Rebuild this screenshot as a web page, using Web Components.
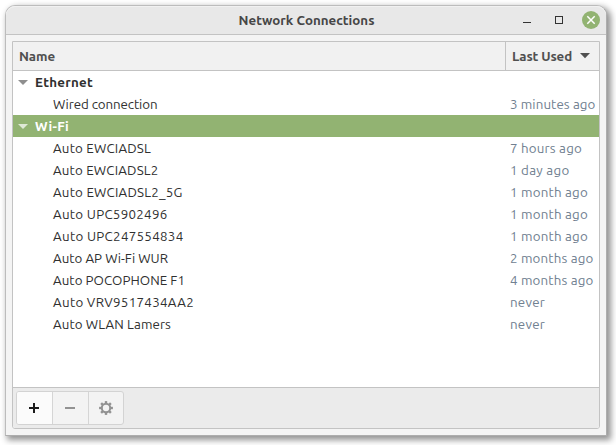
<!DOCTYPE html>
<html lang="en"><head><meta charset="utf-8"><title>Network Connections</title>
<style>html,body{margin:0;height:100%;background:#fff;overflow:hidden}body{font:13.333px/22px Ubuntu,"Noto Sans",sans-serif;color:#303030}</style></head>
<body><network-window></network-window>
<script>
// Single line label whose tracking is adjusted to fill a given width.
class FitLabel extends HTMLElement{
  connectedCallback(){
    this.attachShadow({mode:'open'}).innerHTML='<style>:host{display:block;white-space:pre;flex:none}span{display:inline-block}</style><span><slot></slot></span>';
    const s=this.shadowRoot.querySelector('span'),w=+this.getAttribute('w');
    if(w){s.style.letterSpacing=((w-s.getBoundingClientRect().width)/this.textContent.length)+'px';s.style.width=w+'px'}
  }
}
customElements.define('fit-label',FitLabel);

class TitleBar extends HTMLElement{
  constructor(){super();this.attachShadow({mode:'open'}).innerHTML=`<style>
:host{display:grid;grid-template-columns:1fr auto 1fr;height:29px;box-sizing:border-box;background:#e8e8e8;border-bottom:1px solid #c3c3c3;border-radius:9px 9px 0 0;box-shadow:inset 0 1px #f1f1f1;color:#464646;font-weight:600}
.t{grid-column:2;padding:4px 0 0 1px}
svg{justify-self:end;display:block}</style>
<div class="t"><slot></slot></div>
<svg width="88" height="29" viewBox="0 0 88 29"><path d="M5 16.5h8" stroke="#333" fill="none"/><rect x="37.5" y="10.5" width="7" height="7" fill="none" stroke="#333"/><circle cx="73" cy="14" r="9" fill="#92b372"/><path d="M69.3 10.3l7.4 7.4M76.7 10.3l-7.4 7.4" stroke="#fff" stroke-width="1.5"/></svg>`}
}
customElements.define('title-bar',TitleBar);

class TreeRow extends HTMLElement{
  constructor(){super();this.attachShadow({mode:'open'}).innerHTML=`<style>
:host{display:grid;grid-template-columns:497px 1fr;height:22px;line-height:24px}
:host([group]){font-weight:700}
:host([selected]){background:#92b372;color:#fff}
.n{padding-left:40px;display:flex}:host([group]) .n{padding-left:5px}
svg{display:none;flex:none;margin-right:7px}:host([group]) svg{display:block}
path{fill:#8f8f8f}:host([selected]) path{fill:#dfe9d6}
.d{color:#708090}</style>
<div class="n"><svg width="10" height="22"><path d="M0 9h10L5 14z"/></svg><slot></slot></div><div class="d"><slot name="used"></slot></div>`}
}
customElements.define('tree-row',TreeRow);

class TreeHeader extends HTMLElement{
  constructor(){super();this.attachShadow({mode:'open'}).innerHTML=`<style>
:host{display:grid;grid-template-columns:492px 1fr;height:29px;box-sizing:border-box;border-bottom:1px solid #c3c3c3;background:#f1f1f1;color:#505050;font-weight:700}
div{display:flex;align-items:center;padding:1px 0 0 6px}.b{border-left:1px solid #c3c3c3}
svg{margin:0 0 1px 8px}</style>
<div><slot></slot></div><div class="b"><slot name="used"></slot><svg width="10" height="6"><path d="M0 0h10L5 5.3z" fill="#505050"/></svg></div>`}
}
customElements.define('tree-header',TreeHeader);

class ToolBar extends HTMLElement{
  constructor(){super();
    const teeth=[...Array(8)].map((_,i)=>`<rect x="-1.2" y="-6.9" width="2.4" height="3" transform="rotate(${i*45})"/>`).join('');
    this.attachShadow({mode:'open'}).innerHTML=`<style>
:host{display:flex;height:41px;box-sizing:border-box;border-top:1px solid #c3c3c3;background:#ebebeb;padding:3px;border-radius:0 0 2px 2px}
.g{display:flex;width:108px;height:34px;box-sizing:border-box;border:1px solid #d3d3d3;border-radius:3px;background:#f3f3f3;overflow:hidden}
button{all:unset;box-sizing:border-box;width:36px;height:32px;border-right:1px solid #d5d5d5}
button:first-child{background:#fbfbfb}button:last-child{width:34px;border:0}svg{display:block}</style>
<div class="g"><button aria-label="Add"><svg width="35" height="32"><path d="M12 16h10M17 11v10" stroke="#1c1c1c" stroke-width="2"/></svg></button>
<button aria-label="Remove"><svg width="35" height="32"><path d="M12 16h10" stroke="#929292" stroke-width="2"/></svg></button>
<button aria-label="Settings"><svg width="34" height="32"><g transform="translate(17 16)" fill="#929292">${teeth}<circle r="4.2" fill="none" stroke="#929292" stroke-width="2"/></g></svg></button></div>`}
}
customElements.define('tool-bar',ToolBar);

class NetworkWindow extends HTMLElement{
  constructor(){super();
    const rows=[['Wired connection',104.5,'3 minutes ago',85.5],['Auto EWCIADSL',98,'7 hours ago',72],['Auto EWCIADSL2',105.5,'1 day ago',59.5],['Auto EWCIADSL2_5G',129.5,'1 month ago',78],['Auto UPC5902496',114.5,'1 month ago',78],['Auto UPC247554834',130.5,'1 month ago',78],['Auto AP Wi-Fi WUR',115,'2 months ago',83.5],['Auto POCOPHONE F1',132,'4 months ago',83.5],['Auto VRV9517434AA2',141,'never',35],['Auto WLAN Lamers',118,'never',35]]
    .map(r=>`<tree-row><fit-label w="${r[1]}">${r[0]}</fit-label><fit-label slot="used" w="${r[3]}">${r[2]}</fit-label></tree-row>`);
    this.attachShadow({mode:'open'}).innerHTML=`<style>
:host{display:flex;flex-direction:column;box-sizing:border-box;width:602px;height:431px;margin:5px;border:1px solid #bcbcbc;border-right-color:#adadad;border-bottom-color:#adadad;border-radius:10px 10px 0 0;background:#f4f4f4;box-shadow:3px 3px 6px 1px rgba(0,0,0,.43)}
.wrap{display:flex;flex:1;padding:6px}
.frame{flex:1;display:flex;flex-direction:column;border:1px solid #c3c3c3;border-radius:0 0 3px 3px;background:#fff;box-sizing:border-box}
.list{flex:1}tree-row{line-height:24px}</style>
<title-bar><fit-label w="136">Network Connections</fit-label></title-bar>
<div class="wrap"><div class="frame"><tree-header><fit-label w="36">Name</fit-label><fit-label slot="used" w="60">Last Used</fit-label></tree-header>
<div class="list"><tree-row group><fit-label w="58">Ethernet</fit-label></tree-row>${rows[0]}<tree-row group selected><fit-label w="34">Wi-Fi</fit-label></tree-row>${rows.slice(1).join('')}</div><tool-bar></tool-bar></div></div>`}
}
customElements.define('network-window',NetworkWindow);
</script></body></html>
